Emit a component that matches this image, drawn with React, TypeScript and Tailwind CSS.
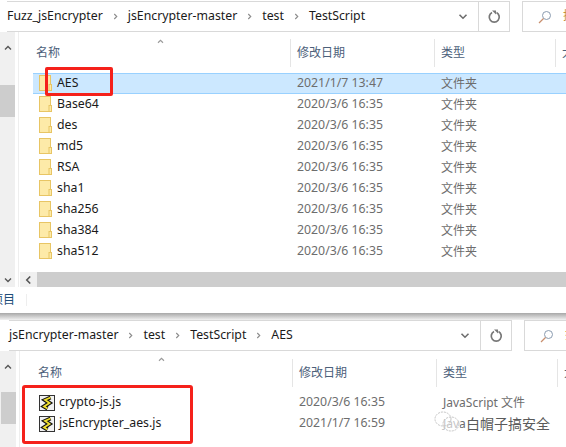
import React from "react";

const folders = [
  ["AES", "2021/1/7 13:47"],
  ["Base64", "2020/3/6 16:35"],
  ["des", "2020/3/6 16:35"],
  ["md5", "2020/3/6 16:35"],
  ["RSA", "2020/3/6 16:35"],
  ["sha1", "2020/3/6 16:35"],
  ["sha256", "2020/3/6 16:35"],
  ["sha384", "2020/3/6 16:35"],
  ["sha512", "2020/3/6 16:35"],
];

const Chevron = ({ dir, className }: { dir: "up" | "down" | "left" | "right"; className: string }) => {
  const d = {
    up: "M1 6 L5 2 L9 6",
    down: "M1 2 L5 6 L9 2",
    left: "M6 0 L2 4 L6 8",
    right: "M2 0 L6 4 L2 8",
  }[dir];
  return (
    <svg viewBox={dir === "up" || dir === "down" ? "0 0 10 8" : "0 0 8 8"} className={className} fill="none" stroke="currentColor">
      <path d={d} strokeWidth="1.8" />
    </svg>
  );
};

const Sep = () => <Chevron dir="right" className="mx-[10px] h-[7px] w-[5px] text-[#8c8c8c]" />;

const Refresh = () => (
  <svg viewBox="0 0 14 14" className="h-[14px] w-[14px] text-[#777777]" fill="none" stroke="currentColor">
    <path d="M5 2.6 A5 5 0 1 0 9.5 2.6" strokeWidth="1.7" />
    <path d="M4 0.5 L8 0.5 L8 4.5 Z" fill="currentColor" stroke="none" transform="translate(1 0)" />
  </svg>
);

const Search = () => (
  <svg viewBox="0 0 14 14" className="h-[14px] w-[14px] shrink-0" fill="none">
    <circle cx="8.5" cy="5.5" r="4" stroke="#8a9bb0" />
    <path d="M5.5 8.5 L1 13" stroke="#c98f6d" strokeWidth="1.3" />
  </svg>
);

const Folder = () => (
  <svg viewBox="0 0 13 16" className="-mt-[2px] h-[16px] w-[13px] shrink-0">
    <rect x="0.5" y="0.5" width="11" height="15" fill="#fdeaa8" stroke="#e8c564" />
    <rect x="10" y="9.5" width="2.5" height="6" fill="#fdeaa8" stroke="#e8c564" />
  </svg>
);

const ScriptIcon = () => (
  <svg viewBox="0 0 16 16" className="-mr-[1px] h-[16px] w-[16px] shrink-0">
    <rect x="0.5" y="0.5" width="15" height="15" fill="#f2f2f2" stroke="#333333" />
    <path d="M11.5 2.5 L6 5 L10.5 8 L5 11.5 L8.5 13.5" fill="none" stroke="#111111" strokeWidth="4" />
    <path d="M11.5 2.5 L6 5 L10.5 8 L5 11.5 L8.5 13.5" fill="none" stroke="#f0e030" strokeWidth="1.8" />
  </svg>
);

const Toolbar = ({ crumbs, searchWidth }: { crumbs: string[]; searchWidth: string }) => (
  <div className="flex h-[31px] items-stretch">
    <div className="flex min-w-0 flex-1 items-center border-y border-[#d9d9d9]">
      {crumbs.map((c, i) => (
        <React.Fragment key={c}>
          {i > 0 && <Sep />}
          <span className="text-[#1a1a1a]">{c}</span>
        </React.Fragment>
      ))}
      <Chevron dir="down" className="ml-auto mr-[10px] h-[7px] w-[10px] text-[#6d6d6d]" />
    </div>
    <div className="flex w-[32px] shrink-0 items-center justify-center border border-[#d9d9d9]">
      <Refresh />
    </div>
    <div className={`ml-[12px] flex shrink-0 items-center overflow-hidden border-y border-l border-[#d9d9d9] pl-[15px] ${searchWidth}`}>
      <Search />
      <span className="ml-[11px] shrink-0 text-[#c98f3d]">搜</span>
    </div>
  </div>
);

const Header = ({ first, arrowTop }: { first: string; arrowTop: string }) => (
  <div className={`relative flex h-[28px] items-center overflow-x-clip text-[12px] text-[#4c607a] ${first}`}>
    <span className="w-[254px] shrink-0">名称</span>
    <span className="h-full w-px shrink-0 bg-[#e5e5e5]" />
    <span className="ml-[6px] w-[137px] shrink-0">修改日期</span>
    <span className="h-full w-px shrink-0 bg-[#e5e5e5]" />
    <span className="ml-[6px] w-[114px] shrink-0">类型</span>
    <span className="h-full w-px shrink-0 bg-[#e5e5e5]" />
    <span className="ml-[6px] shrink-0">大</span>
    <Chevron dir="up" className={`absolute left-[137px] h-[5px] w-[9px] text-[#9a9a9a] ${arrowTop}`} />
  </div>
);

const Row = ({ icon, name, date, type, selected }: { icon: React.ReactNode; name: string; date: string; type: string; selected?: boolean }) => (
  <div className={`flex h-[21px] items-center pl-[6px] ${selected ? "border-y border-[#99d1ff] bg-[#cce8ff]" : ""}`}>
    {icon}
    <span className="ml-[5px] w-[240px] shrink-0 text-[#1a1a1a]">{name}</span>
    <span className="w-[144px] shrink-0 text-[#6d6d6d]">{date}</span>
    <span className="text-[12px] text-[#6d6d6d]">{type}</span>
  </div>
);

export default function App() {
  return (
    <div className="relative h-[447px] w-[566px] overflow-hidden bg-white font-['Noto_Sans','Noto_Sans_CJK_SC',sans-serif] text-[12.3px] leading-none">
      <div className="flex h-[313px] flex-col">
        <div className="pl-[7px] pt-[1px]">
          <Toolbar crumbs={["Fuzz_jsEncrypter", "jsEncrypter-master", "test", "TestScript"]} searchWidth="w-[44px]" />
        </div>
        <div className="flex flex-1">
          <div className="flex w-[15px] shrink-0 flex-col items-center bg-[#f0f0f0]">
            <Chevron dir="up" className="mt-[13px] h-[6px] w-[10px] text-[#555]" />
            <div className="mt-[34px] h-[32px] w-full bg-[#cdcdcd]" />
            <Chevron dir="down" className="mb-[4px] mt-auto h-[6px] w-[10px] text-[#555]" />
          </div>
          <div className="ml-[3px] flex min-w-0 flex-1 flex-col border-l border-[#eeeeee]">
            <div className="pt-[7px]">
              <Header first="pl-[17px]" arrowTop="top-0" />
            </div>
            <div className="mt-[6px] pl-[14px]">
              {folders.map(([name, date], i) => (
                <Row key={name} icon={<Folder />} name={name} date={date} type="文件夹" selected={i === 0} />
              ))}
            </div>
            <div className="mt-[10px] ml-[1px] flex h-[15px] items-center bg-[#cdcdcd]">
              <div className="flex h-full w-[17px] items-center justify-center bg-[#f0f0f0]">
                <Chevron dir="left" className="h-[8px] w-[7px] text-[#555]" />
              </div>
            </div>
          </div>
        </div>
        <div className="flex h-[26px] items-center">
          <span className="ml-[-9px] text-[12px] text-[#1f4e79]">项目</span>
          <span className="ml-[11px] h-[12px] w-px bg-[#eeeeee]" />
        </div>
      </div>

      <div className="h-[7px] bg-gradient-to-b from-[#a8a8a8] to-[#f2f2f2]" />

      <div>
        <div className="pl-[9px]">
          <Toolbar crumbs={["jsEncrypter-master", "test", "TestScript", "AES"]} searchWidth="w-[42px]" />
        </div>
        <div className="flex h-[96px]">
          <div className="flex w-[16px] shrink-0 flex-col items-center bg-[#f0f0f0]">
            <Chevron dir="up" className="mt-[13px] h-[6px] w-[10px] text-[#555]" />
            <div className="ml-[1px] mt-[22px] h-[32px] w-[15px] bg-[#cdcdcd]" />
          </div>
          <div className="ml-[3px] min-w-0 flex-1 border-l border-[#eeeeee]">
            <div className="pt-[8px]">
              <Header first="pl-[18px]" arrowTop="top-[-2px]" />
            </div>
            <div className="mt-[5px] pl-[13px]">
              <Row icon={<ScriptIcon />} name="crypto-js.js" date="2020/3/6 16:35" type="JavaScript 文件" />
              <Row icon={<ScriptIcon />} name="jsEncrypter_aes.js" date="2021/1/7 16:59" type="JavaScript 文件" />
            </div>
          </div>
        </div>
      </div>

      <div className="absolute left-[45px] top-[67px] h-[29px] w-[68px] rounded-[2px] border-[3px] border-[#f5211b]" />
      <div className="absolute left-[22px] top-[385px] h-[59px] w-[171px] rounded-[3px] border-[3px] border-[#f5211b]" />

      <div className="absolute left-[434px] top-[411px] flex items-center bg-white/60">
        <svg viewBox="0 0 26 22" className="h-[22px] w-[26px]" fill="none" stroke="#c4c4c4" strokeDasharray="2 1">
          <ellipse cx="9" cy="8" rx="8" ry="7" />
          <ellipse cx="17" cy="13" rx="8" ry="7" />
        </svg>
      </div>
      <span className="absolute left-[466px] top-[414px] bg-white font-['Noto_Sans_CJK_SC',sans-serif] text-[14px] leading-[18px] text-[#5a5a5a]">
        白帽子搞安全
      </span>
    </div>
  );
}
